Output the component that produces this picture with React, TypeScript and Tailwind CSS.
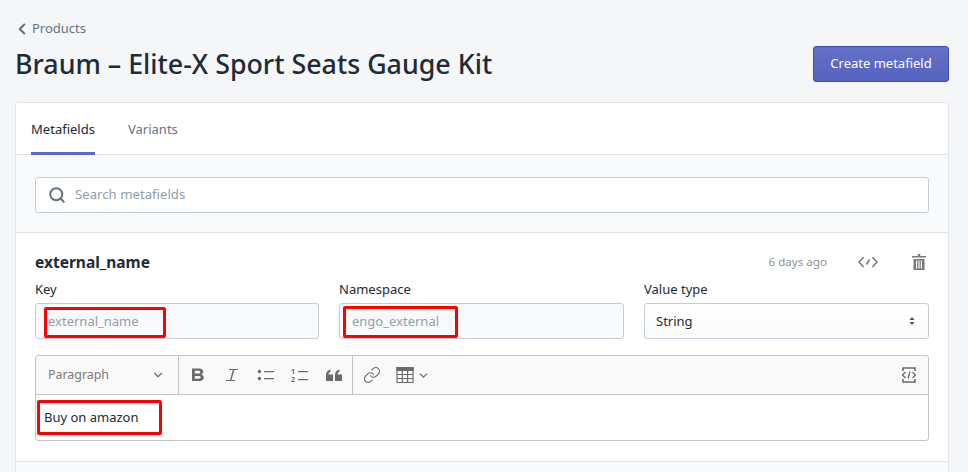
import type { FC, ReactNode } from "react";
import { ChevronLeft, ChevronDown, Search, Link } from "lucide-react";

const FONT = "font-['Noto_Sans','Open_Sans',sans-serif]";

// red annotation drawn on top of the screenshot
const RedBox: FC<{ className: string }> = ({ className }) => (
  <div className={`absolute border-[3px] border-[#f00] rounded-[2px] ${className}`} />
);

const Field: FC<{ label: string; className?: string; children: ReactNode }> = ({ label, className = "flex-1", children }) => (
  <div className={`min-w-0 ${className}`}>
    <div className="h-[20px] text-[13px] leading-[20px] text-[#212b36] mb-[4px]">{label}</div>
    {children}
  </div>
);

const ToolIcon: FC<{ children: ReactNode; w?: number }> = ({ children, w = 20 }) => (
  <svg width={w} height="20" viewBox={`0 0 ${w} 20`} fill="#6b6b6b" className="shrink-0">
    {children}
  </svg>
);

const App: FC = () => {
  return (
    <div className={`h-[472px] w-[968px] overflow-hidden bg-[#f4f6f8] pl-[15px] pr-[19px] ${FONT}`}>
      {/* header */}
      <div className="h-[102px] pt-[19px] flex justify-between">
        <div>
          <div className="flex items-center h-[18px] mt-[1px] text-[13px] text-[#637381]">
            <ChevronLeft size={18} strokeWidth={2.8} className="mr-[1px] -ml-[2px] text-[#637381]" />
            Products
          </div>
          <h1 className="mt-[8px] text-[26.8px] leading-[36px] font-medium text-[#212b36]">
            Braum – Elite-X Sport Seats Gauge Kit
          </h1>
        </div>
        <button className="mt-[27px] h-[36px] w-[136px] rounded-[3px] border border-[#3f4eae] bg-gradient-to-b from-[#6371c7] to-[#5563c1] text-[13px] text-white">
          Create metafield
        </button>
      </div>

      {/* card */}
      <div className="bg-white rounded-t-[3px] border border-[#e3e6ea] h-[400px]">
        <div className="h-[52px] border-b border-[#dfe3e8] flex pl-[15px] text-[13px]">
          <div className="h-[52px] w-[64px] border-b-[3px] border-[#5c6ac4] pt-[16px] leading-[20px] text-[#212b36] text-center whitespace-nowrap">
            Metafields
          </div>
          <div className="ml-[33px] pt-[16px] leading-[20px] text-[#637381]">Variants</div>
        </div>

        <div className="h-[78px] bg-[#f9fafb] border-b border-[#dfe3e8] px-[19px] pt-[22px]">
          <div className="h-[36px] bg-white border border-[#c4cdd5] rounded-[3px] flex items-center pl-[12px]">
            <Search size={18} strokeWidth={2.6} className="text-[#637381]" />
            <span className="ml-[9px] text-[13.2px] text-[#919eab] -mt-[1px]">Search metafields</span>
          </div>
        </div>

        <div className="h-[229px] px-[19px] pt-[19px] border-b border-[#dfe3e8] relative">
          <div className="flex items-center h-[20px]">
            <div className="text-[15.5px] leading-[20px] font-bold text-[#212b36]">external_name</div>
            <div className="ml-auto text-[11.6px] text-[#919191]">6 days ago</div>
            <svg width="20" height="14" viewBox="0 0 20 14" fill="none" stroke="#7a7a7a" strokeWidth="1.6" className="ml-[31px]">
              <path d="M5.500 2 1 7l4.500 5M14.500 2 19 7l-4.500 5M11.500 4.500 8.500 9.500" />
            </svg>
            <svg width="16" height="18" viewBox="0 0 16 18" fill="#7a7a7a" className="ml-[33px] mr-[2px]">
              <path d="M6.800 1h2.400v2H15v1.600H1V3h5.800zM2.500 6h11v11h-11zM5 7.500v8h1.200v-8zm2.400 0v8h1.200v-8zm2.400 0v8H11v-8z" fillRule="evenodd" />
            </svg>
          </div>

          <div className="flex gap-[20px] mt-[7px]">
            <Field label="Key" className="w-[284px] shrink-0">
              <div className="h-[36px] bg-[#f9fafb] border border-[#c4cdd5] rounded-[3px] pl-[12px] text-[13px] leading-[34px] text-[#919eab]">
                external_name
              </div>
            </Field>
            <Field label="Namespace">
              <div className="h-[36px] bg-[#f9fafb] border border-[#c4cdd5] rounded-[3px] pl-[12px] text-[13px] leading-[34px] text-[#919eab]">
                engo_external
              </div>
            </Field>
            <Field label="Value type">
              <div className="h-[36px] bg-gradient-to-b from-white to-[#f9fafb] border border-[#c4cdd5] rounded-[3px] pl-[11px] pr-[12px] text-[13px] leading-[34px] text-[#212b36] flex items-center justify-between">
                String
                <svg width="8" height="12" viewBox="0 0 8 12" fill="#454f5b">
                  <path d="M4 2 6.500 5h-5zM4 10 1.500 7h5z" />
                </svg>
              </div>
            </Field>
          </div>

          <div className="mt-[16px] h-[86px] border border-[#c4c4c4] rounded-[3px]">
            <div className="h-[39px] bg-[#f9f9f9] border-b border-[#c4c4c4] rounded-t-[3px] flex items-center">
              <div className="w-[143px] h-full border-r border-[#c4c4c4] flex items-center justify-between pl-[12px] pr-[13px] text-[12.4px] text-[#7a7a7a]">
                Paragraph
                <ChevronDown size={14} strokeWidth={2} className="text-[#6b6b6b]" />
              </div>
              <div className="w-[174px] h-full border-r border-[#c4c4c4] flex items-center pl-[9px] gap-[14px]">
                <ToolIcon>
                  <path d="M4 3.500h7.200c2.600 0 4 1.300 4 3.300 0 1.300-.7 2.200-1.800 2.700 1.500.4 2.400 1.600 2.400 3.100 0 2.100-1.600 3.400-4.200 3.400H4zm2.800 2.300v2.800h3.800c1 0 1.700-.6 1.700-1.400s-.6-1.400-1.700-1.400zm0 5.100v2.800h4.100c1.100 0 1.700-.6 1.700-1.400s-.7-1.400-1.800-1.400z" fillRule="evenodd" />
                </ToolIcon>
                <ToolIcon>
                  <path d="M7 4h9v1h-3.700L9.500 15H13v1H4v-1h4l2.800-10H7z" />
                </ToolIcon>
                <ToolIcon>
                  <circle cx="3.500" cy="6.500" r="1.700" />
                  <circle cx="3.500" cy="13.500" r="1.700" />
                  <path d="M8 6h10v1.300H8zM8 13h10v1.300H8z" />
                </ToolIcon>
                <ToolIcon>
                  <path d="M8 6h10v1.300H8zM8 14h10v1.300H8z" />
                  <text x="1" y="9" fontSize="7" fontWeight="700">1</text>
                  <text x="1" y="17" fontSize="7" fontWeight="700">2</text>
                </ToolIcon>
                <ToolIcon>
                  <path d="M2 16v-6c0-3 1.700-4.700 4.500-5.500v2.200C5.200 7.200 4.600 8 4.500 9.500H9V16zM11 16v-6c0-3 1.700-4.700 4.500-5.500v2.200c-1.300.5-1.900 1.300-2 2.800H18V16z" />
                </ToolIcon>
              </div>
              <div className="flex-1 h-full flex items-center pl-[10px] pr-[10px]">
                <Link size={18} strokeWidth={1.6} className="text-[#6b6b6b]" />
                <svg width="18" height="18" viewBox="0 0 18 18" fill="none" stroke="#6b6b6b" strokeWidth="1.2" className="ml-[15px]">
                  <path d="M1 1.500h16v15H1z" />
                  <path d="M1 1.500h16v3H1z" fill="#6b6b6b" />
                  <path d="M1 8.500h16M1 12.500h16M6.300 4.500v12M11.600 4.500v12" />
                </svg>
                <ChevronDown size={13} strokeWidth={2.2} className="ml-[3px] text-[#6b6b6b]" />
                <svg width="18" height="18" viewBox="0 0 18 18" fill="none" stroke="#6b6b6b" strokeWidth="1.6" className="ml-auto">
                  <path d="M3 5V2h12v3M3 13v3h12v-3" />
                  <path d="M5.500 6 2.500 9l3 3M12.500 6l3 3-3 3M10 5.500l-2 7" strokeWidth="1.3" />
                </svg>
              </div>
            </div>
            <div className="pl-[8px] pt-[12px] text-[13px] leading-[20px] text-[#212b36]">Buy on amazon</div>
          </div>

          <RedBox className="left-[28px] top-[74px] w-[122px] h-[31px]" />
          <RedBox className="left-[327px] top-[73px] w-[115px] h-[32px]" />
          <RedBox className="left-[21px] top-[167px] w-[125px] h-[35px]" />
        </div>

        <div className="h-[40px] bg-[#f9fafb]" />
      </div>
    </div>
  );
};

export default App;
